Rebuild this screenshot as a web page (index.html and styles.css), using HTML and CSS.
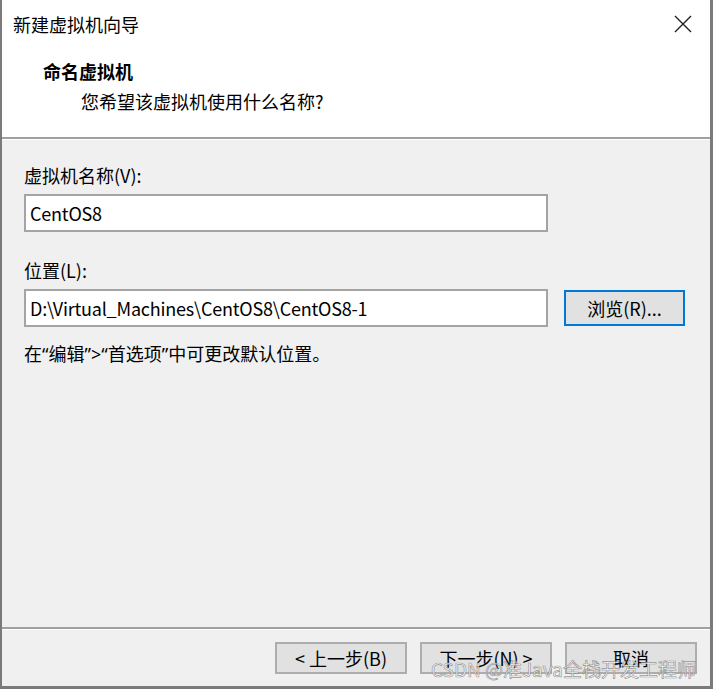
FILE: index.html
```html
<!DOCTYPE html>
<html lang="zh-CN">
<head>
  <meta charset="UTF-8">
  <title>新建虚拟机向导</title>
  <link rel="stylesheet" href="styles.css">
</head>
<body>
  <div class="window">
    <div class="header">
      <div class="titlebar">
        <span class="title">新建虚拟机向导</span>
        <svg class="close" width="18" height="18" viewBox="0 0 18 18">
          <path d="M1 1 L17 17 M17 1 L1 17" stroke="#222" stroke-width="1.4" fill="none"/>
        </svg>
      </div>
      <div class="heading">命名虚拟机</div>
      <div class="subheading">您希望该虚拟机使用什么名称?</div>
    </div>
    <div class="sep"></div>

    <div class="content">
      <div class="label first">虚拟机名称(V):</div>
      <div class="field">CentOS8</div>

      <div class="label">位置(L):</div>
      <div class="row">
        <div class="field">D:\Virtual_Machines\CentOS8\CentOS8-1</div>
        <button class="btn browse">浏览(R)...</button>
      </div>
      <div class="hint">在<span class="q">“</span>编辑<span class="q">”&gt;“</span>首选项<span class="q">”</span>中可更改默认位置。</div>
    </div>

    <div class="sep"></div>
    <div class="footer">
      <button class="btn">&lt; 上一步(B)</button>
      <button class="btn">下一步(N) &gt;</button>
      <button class="btn">取消</button>
    </div>
    <div class="watermark">CSDN @准Java全栈开发工程师</div>
  </div>
</body>
</html>
```

FILE: styles.css
```css
* {
  box-sizing: border-box;
}
body {
  margin: 0;
  font-family: "Noto Sans CJK SC", "Noto Sans", sans-serif;
  font-size: 18px;
  color: #000;
}
.window {
  position: relative;
  width: 713px;
  height: 689px;
  border-left: 2px solid #7a7a7a;
  border-right: 3px solid #7a7a7a;
  border-bottom: 3px solid #7a7a7a;
  background: #f0f0f0;
  display: flex;
  flex-direction: column;
}
.header {
  background: #fff;
  height: 137px;
}
.titlebar {
  height: 48px;
  display: flex;
  align-items: center;
  justify-content: space-between;
  padding: 0 18px 0 11px;
}
.title {
  line-height: 24px;
}
.heading {
  margin-top: 11px;
  padding-left: 41px;
  font-weight: bold;
  line-height: 24px;
}
.subheading {
  margin-top: 6px;
  padding-left: 79px;
  line-height: 24px;
}
.sep {
  height: 3px;
  border-top: 2px solid #a0a0a0;
  border-bottom: 1px solid #fff;
}
.content {
  flex: 1;
  padding: 23px 0 0 22px;
}
.label {
  line-height: 24px;
  margin-top: 26px;
}
.label.first {
  margin-top: 0;
}
.field {
  width: 524px;
  height: 38px;
  margin-top: 7px;
  border: 2px solid #a4a4a4;
  background: #fff;
  padding-left: 4px;
  line-height: 34px;
  letter-spacing: -0.2px;
}
.row {
  display: flex;
  align-items: center;
  gap: 16px;
}
.btn {
  font-family: inherit;
  font-size: 18px;
  color: #000;
  background: #e1e1e1;
  border: 2px solid #adadad;
  width: 132px;
  height: 32px;
  padding: 0;
  line-height: 26px;
}
.browse {
  width: 121px;
  height: 36px;
  margin-top: 7px;
  border-color: #0078d7;
}
.hint {
  margin-top: 14px;
  line-height: 24px;
}
.q {
  font-family: "Noto Sans", sans-serif;
}
.footer {
  height: 56px;
  display: flex;
  justify-content: flex-end;
  align-items: flex-start;
  gap: 13px;
  padding: 12px 13px 0 0;
}
.watermark {
  position: absolute;
  right: 14px;
  bottom: 4px;
  font-size: 19px;
  color: rgba(255, 255, 255, 0.8);
  -webkit-text-stroke: 0.7px rgba(110, 110, 110, 0.7);
}
```
